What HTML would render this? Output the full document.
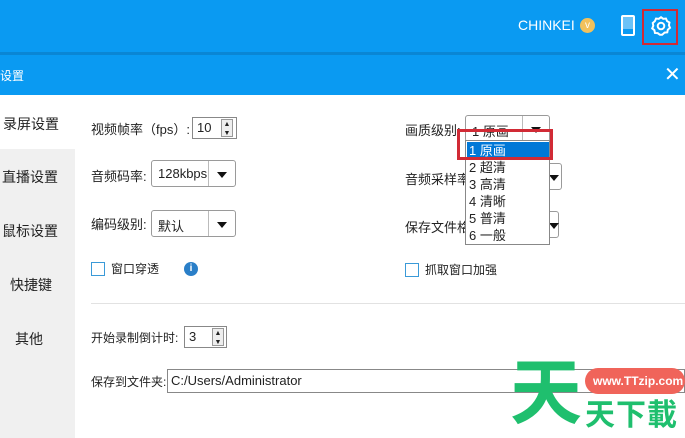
<!DOCTYPE html>
<html><head><meta charset="utf-8"><style>
*{margin:0;padding:0;box-sizing:border-box}
body{width:685px;height:438px;overflow:hidden;position:relative;background:#fff;font-family:"Liberation Sans","Noto Sans CJK SC",sans-serif;font-size:13px;color:#222}
.a{position:absolute}
.sel{border:1px solid #9a9a9a;border-radius:3px;background:#fff}
.arr{position:absolute;right:0;top:0;bottom:0;width:27px;border-left:1px solid #bbb}
.arr:after{content:"";position:absolute;left:8px;top:11px;border:5px solid transparent;border-top:6px solid #111}
.cb{width:14px;height:14px;border:1px solid #3a9ad8;background:#fff}
</style></head><body>
<div class="a" style="left:0;top:0;width:685px;height:52px;background:#0a9af2"></div>
<div class="a" style="left:0;top:52px;width:685px;height:3px;background:#0a86d4"></div>
<div class="a" style="left:0;top:55px;width:685px;height:40px;background:#0a9af2"></div>
<div class="a" style="left:518px;top:17px;color:#fff;font-size:14px">CHINKEI</div>
<div class="a" style="left:580px;top:18px;width:15px;height:15px;border-radius:50%;background:#f2c15c;color:#fff;font-size:10px;text-align:center;line-height:15px">v</div>
<div class="a" style="left:621px;top:15px;width:14px;height:21px;border:2px solid #fff;border-radius:2px"></div>
<div class="a" style="left:623px;top:17px;width:10px;height:12px;background:#fff;opacity:.4"></div>
<svg class="a" style="left:650px;top:15px" width="22" height="22" viewBox="0 0 20 20"><path d="M10 2l2 1.5 2.5-.3 1 2.3 2.2 1.3-.5 2.5 1 2.4-2 1.6-.5 2.5-2.5.2L11 18h-2l-2-1.5-2.5-.2-.5-2.5-2-1.6 1-2.4-.5-2.5L4.5 5.5l1-2.3 2.5.3z" fill="none" stroke="#fff" stroke-width="1.8"/><circle cx="10" cy="10" r="3" fill="none" stroke="#fff" stroke-width="1.8"/></svg>
<div class="a" style="left:642px;top:9px;width:36px;height:36px;border:2px solid #d12a35"></div>
<div class="a" style="left:0;top:67px;color:#fff;font-size:12px">设置</div>
<div class="a" style="left:664px;top:62px;color:#fff;font-size:20px">✕</div>
<div class="a" style="left:0;top:95px;width:75px;height:343px;background:#f0f0f0"></div>
<div class="a" style="left:0;top:95px;width:75px;height:54px;background:#fff"></div>
<div class="a" style="left:3px;top:114px;font-size:14px">录屏设置</div>
<div class="a" style="left:2px;top:167px;font-size:14px">直播设置</div>
<div class="a" style="left:2px;top:221px;font-size:14px">鼠标设置</div>
<div class="a" style="left:10px;top:275px;font-size:14px">快捷键</div>
<div class="a" style="left:15px;top:329px;font-size:14px">其他</div>

<div class="a" style="left:91px;top:119px">视频帧率（fps）:</div>
<div class="a" style="left:192px;top:117px;width:45px;height:22px;border:1px solid #888;background:#fff;padding:2px 0 0 4px">10</div>
<div class="a" style="left:221px;top:119px;width:12px;height:18px;border:1px solid #999;background:#eee;font-size:7px;line-height:9px;text-align:center">▲<br>▼</div>
<div class="a" style="left:91px;top:166px">音频码率:</div>
<div class="a sel" style="left:151px;top:160px;width:85px;height:27px;padding:5px 0 0 6px">128kbps<div class="arr"></div></div>
<div class="a" style="left:91px;top:214px">编码级别:</div>
<div class="a sel" style="left:151px;top:210px;width:85px;height:27px;padding:5px 0 0 6px">默认<div class="arr"></div></div>
<div class="a cb" style="left:91px;top:262px"></div>
<div class="a" style="left:111px;top:260px;font-size:12px">窗口穿透</div>
<div class="a" style="left:184px;top:262px;width:14px;height:14px;border-radius:50%;background:#2a7fc8;color:#fff;font-size:10px;text-align:center;line-height:14px;font-weight:bold">i</div>

<div class="a" style="left:405px;top:120px">画质级别:</div>
<div class="a sel" style="left:465px;top:115px;width:85px;height:27px;padding:5px 0 0 6px">1 原画<div class="arr"></div></div>
<div class="a" style="left:405px;top:169px">音频采样率</div>
<div class="a sel" style="left:540px;top:163px;width:22px;height:27px"><div class="arr" style="width:20px;border:0"></div></div>
<div class="a" style="left:405px;top:217px">保存文件格</div>
<div class="a sel" style="left:540px;top:211px;width:19px;height:27px"><div class="arr" style="width:17px;border:0"></div></div>
<div class="a cb" style="left:405px;top:263px"></div>
<div class="a" style="left:425px;top:261px;font-size:12px">抓取窗口加强</div>

<div class="a" style="left:465px;top:140px;width:85px;height:105px;border:1px solid #888;background:#fff;line-height:17px;padding-left:3px">
<div style="background:#0078d7;color:#fff;margin:1px 0 0 -2px;padding-left:2px;height:17px;line-height:17px">1 原画</div>
<div style="line-height:17px">2 超清</div><div style="line-height:17px">3 高清</div><div style="line-height:17px">4 清晰</div><div style="line-height:17px">5 普清</div><div style="line-height:17px">6 一般</div></div>
<div class="a" style="left:457px;top:129px;width:96px;height:31px;border:3px solid #d12a35"></div>

<div class="a" style="left:91px;top:303px;width:594px;height:1px;background:#e2e2e2"></div>
<div class="a" style="left:91px;top:329px;font-size:12px">开始录制倒计时:</div>
<div class="a" style="left:184px;top:326px;width:43px;height:22px;border:1px solid #888;background:#fff;padding:2px 0 0 4px">3</div>
<div class="a" style="left:212px;top:328px;width:12px;height:18px;border:1px solid #999;background:#eee;font-size:7px;line-height:9px;text-align:center">▲<br>▼</div>
<div class="a" style="left:91px;top:373px;font-size:12px">保存到文件夹:</div>
<div class="a" style="left:167px;top:369px;width:518px;height:24px;border:1px solid #888;background:#fff;padding:3px 0 0 3px">C:/Users/Administrator</div>
<div class="a" style="left:510px;top:358px;color:#1fbf6e;font-size:72px;font-weight:bold;line-height:1">天</div>
<div class="a" style="left:585px;top:368px;width:100px;height:26px;border-radius:13px;background:#f0645a;color:#fff;font-size:12px;font-weight:bold;padding:6px 0 0 8px">www.TTzip.com</div>
<div class="a" style="left:585px;top:398px;color:#1fbf6e;font-size:30px;font-weight:bold;letter-spacing:1px;line-height:1.2">天下載</div>
</body></html>
